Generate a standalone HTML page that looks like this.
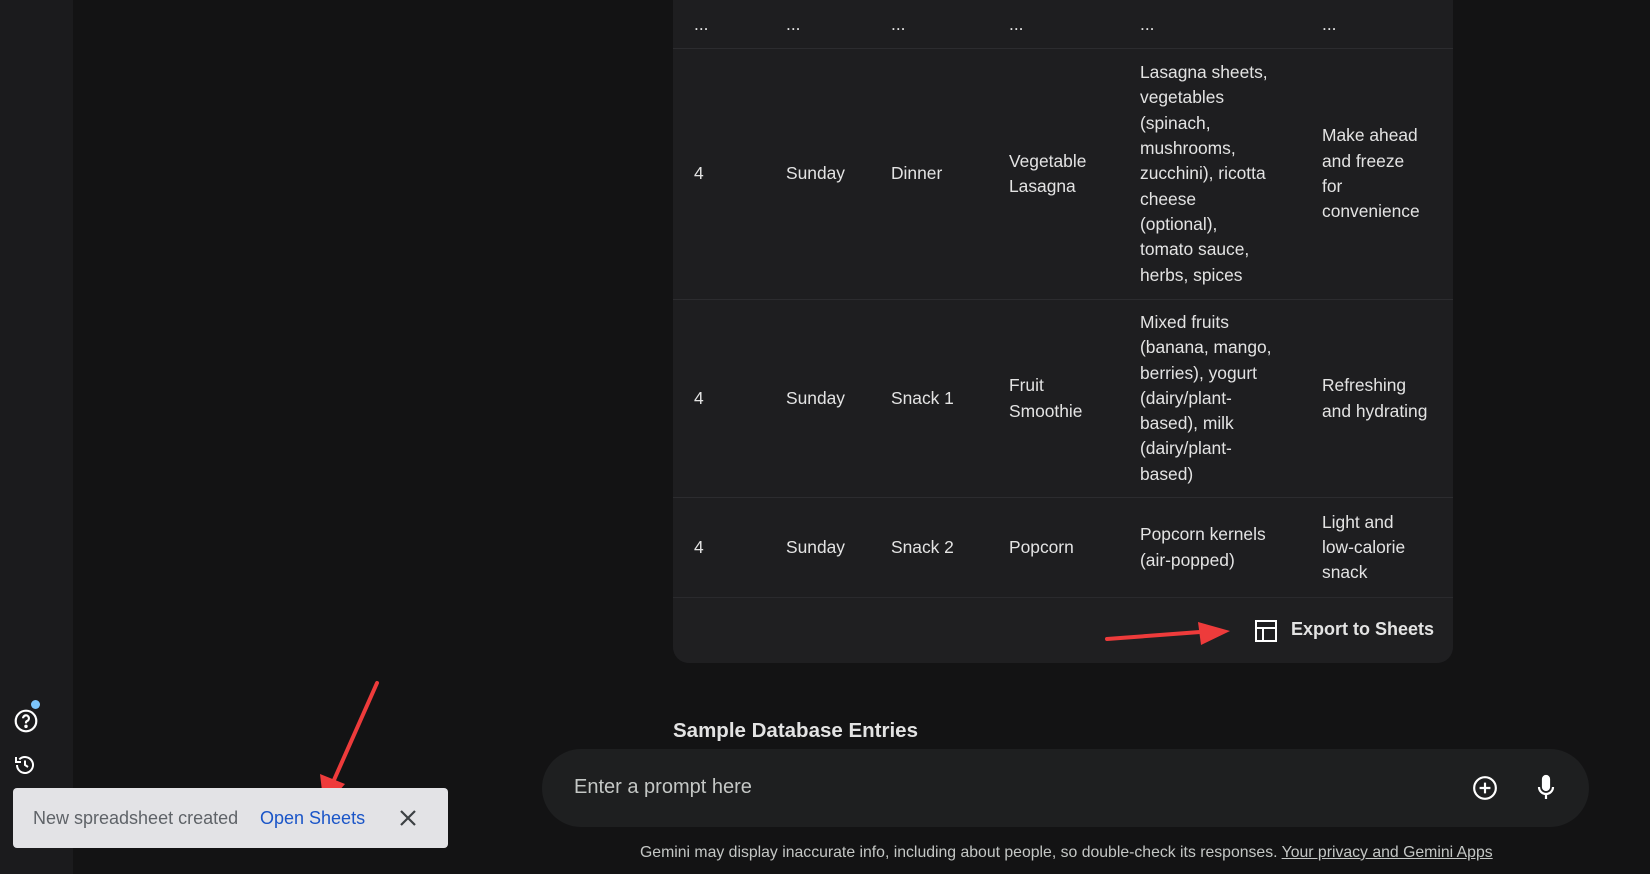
<!DOCTYPE html>
<html><head><meta charset="utf-8"><style>
*{margin:0;padding:0;box-sizing:border-box}
body{width:1650px;height:874px;background:#131314;font-family:"Liberation Sans",sans-serif;color:#e3e3e3;position:relative;overflow:hidden}
.side{position:absolute;left:0;top:0;width:73px;height:874px;background:#1b1b1d}
.card{position:absolute;left:673px;top:-20px;width:780px;height:683px;background:#1e1e20;border-radius:16px}
.row{position:absolute;left:0;width:780px;border-bottom:1px solid #2c2c2f}
.cell{position:absolute;top:0;height:100%;display:flex;align-items:center;font-size:17.4px;line-height:25.3px;color:#e3e3e3}
.foot{position:absolute;left:0;width:780px;top:617px;height:66px;background:#1f1f21;border-top:1px solid #2a2a2d;border-radius:0 0 16px 16px}
.h{position:absolute;left:673px;top:719px;font-size:20.5px;font-weight:bold;color:#e3e3e3}
.bar{position:absolute;left:542px;top:749px;width:1047px;height:78px;border-radius:39px;background:#1e1f20}
.ph{position:absolute;left:32px;top:27px;font-size:20px;color:#c4c7c5}
.disc{position:absolute;left:0;width:1650px;top:844px;padding-left:640px;font-size:15.8px;color:#c4c7c5}
.disc u{color:#c4c7c5}
.toast{position:absolute;left:13px;top:788px;width:435px;height:60px;background:#e3e3e6;border-radius:4px}
.toast .t{position:absolute;left:20px;top:20px;font-size:18px;color:#5f6368}
.toast .o{position:absolute;left:247px;top:20px;font-size:18px;color:#1a55c8}
</style></head><body>
<div class="side"></div>
<svg style="position:absolute;left:13px;top:708px" width="26" height="26" viewBox="0 0 24 24" fill="none" stroke="#fff" stroke-width="2"><circle cx="12" cy="12" r="9.5"/><path d="M9.3 9.5a2.7 2.7 0 1 1 3.7 2.5c-.7.3-1 .9-1 1.6v.6"/><circle cx="12" cy="17" r=".6" fill="#fff"/></svg>
<div style="position:absolute;left:31px;top:700px;width:9px;height:9px;border-radius:50%;background:#7cc4fa"></div>
<svg style="position:absolute;left:13px;top:753px" width="24" height="24" viewBox="0 0 24 24" fill="none" stroke="#fff" stroke-width="2"><path d="M4 12a8 8 0 1 0 2.3-5.6"/><path d="M3 4v5h5"/><path d="M12 7.5V12l3 2"/></svg>

<div class="card">
 <div class="row" style="top:0;height:69px">
  <div class="cell" style="left:21px;top:20px;height:49px">...</div><div class="cell" style="left:113px;top:20px;height:49px">...</div><div class="cell" style="left:218px;top:20px;height:49px">...</div><div class="cell" style="left:336px;top:20px;height:49px">...</div><div class="cell" style="left:467px;top:20px;height:49px">...</div><div class="cell" style="left:649px;top:20px;height:49px">...</div>
 </div>
 <div class="row" style="top:69px;height:251px">
  <div class="cell" style="left:21px">4</div><div class="cell" style="left:113px">Sunday</div><div class="cell" style="left:218px">Dinner</div><div class="cell" style="left:336px">Vegetable<br>Lasagna</div><div class="cell" style="left:467px">Lasagna sheets,<br>vegetables<br>(spinach,<br>mushrooms,<br>zucchini), ricotta<br>cheese<br>(optional),<br>tomato sauce,<br>herbs, spices</div><div class="cell" style="left:649px">Make ahead<br>and freeze<br>for<br>convenience</div>
 </div>
 <div class="row" style="top:320px;height:198px">
  <div class="cell" style="left:21px">4</div><div class="cell" style="left:113px">Sunday</div><div class="cell" style="left:218px">Snack 1</div><div class="cell" style="left:336px">Fruit<br>Smoothie</div><div class="cell" style="left:467px">Mixed fruits<br>(banana, mango,<br>berries), yogurt<br>(dairy/plant-<br>based), milk<br>(dairy/plant-<br>based)</div><div class="cell" style="left:649px">Refreshing<br>and hydrating</div>
 </div>
 <div class="row" style="top:518px;height:99px;border:none">
  <div class="cell" style="left:21px">4</div><div class="cell" style="left:113px">Sunday</div><div class="cell" style="left:218px">Snack 2</div><div class="cell" style="left:336px">Popcorn</div><div class="cell" style="left:467px">Popcorn kernels<br>(air-popped)</div><div class="cell" style="left:649px">Light and<br>low-calorie<br>snack</div>
 </div>
 <div class="foot">
  <svg style="position:absolute;left:581px;top:21px" width="24" height="24" viewBox="0 0 24 24" fill="none" stroke="#fff" stroke-width="2"><rect x="2" y="2" width="20" height="20"/><path d="M2 9h20M9 9v13"/></svg>
  <div style="position:absolute;left:618px;top:21px;font-size:18px;font-weight:bold;color:#e3e3e3">Export to Sheets</div>
 </div>
</div>
<svg style="position:absolute;left:0;top:0" width="1650" height="874"><path d="M1107 639 L1200 632" stroke="#ee3b3b" stroke-width="4" stroke-linecap="round"/><path d="M1198 622 L1230 631 L1201 645 Z" fill="#ee3b3b"/><path d="M377 683 L334 780" stroke="#ee3b3b" stroke-width="4" stroke-linecap="round"/><path d="M320 774 L324 808 L345 784 Z" fill="#ee3b3b"/></svg>

<div class="h">Sample Database Entries</div>
<div class="bar"><div class="ph">Enter a prompt here</div>
 <svg style="position:absolute;left:930px;top:26px" width="26" height="26" viewBox="0 0 24 24" fill="none" stroke="#fff" stroke-width="2"><circle cx="12" cy="12" r="10"/><path d="M12 7v10M7 12h10"/></svg>
 <svg style="position:absolute;left:992px;top:25px" width="24" height="28" viewBox="0 0 24 28" fill="none" stroke="#fff" stroke-width="2.2"><rect x="9" y="2" width="6" height="14" rx="3" fill="#fff"/><path d="M5 13a7 7 0 0 0 14 0M12 20v5"/></svg>
</div>
<div class="disc">Gemini may display inaccurate info, including about people, so double-check its responses. <u>Your privacy and Gemini Apps</u></div>
<div class="toast"><div class="t">New spreadsheet created</div><div class="o">Open Sheets</div>
 <svg style="position:absolute;left:386px;top:21px" width="18" height="18" viewBox="0 0 18 18" stroke="#3c4043" stroke-width="2.2"><path d="M2 2L16 16M16 2L2 16"/></svg>
</div>
</body></html>
